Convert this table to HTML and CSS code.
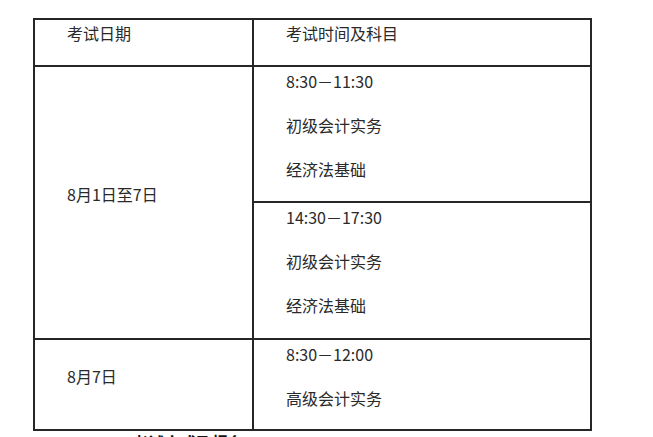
FILE: index.html
```html
<!DOCTYPE html>
<html lang="zh-CN">
<head>
<meta charset="utf-8">
<title>考试时间安排</title>
<link rel="stylesheet" href="styles.css">
</head>
<body>
<table class="exam">
  <tr class="head">
    <td class="c1"><p>考试日期</p></td>
    <td class="c2"><p>考试时间及科目</p></td>
  </tr>
  <tr class="r1">
    <td class="c1 date" rowspan="2"><p>8月1日至7日</p></td>
    <td class="c2 slot"><p>8:30－11:30</p><p>初级会计实务</p><p>经济法基础</p></td>
  </tr>
  <tr class="r2">
    <td class="c2 slot"><p>14:30－17:30</p><p>初级会计实务</p><p>经济法基础</p></td>
  </tr>
  <tr class="r3">
    <td class="c1 date"><p>8月7日</p></td>
    <td class="c2 slot"><p>8:30－12:00</p><p>高级会计实务</p></td>
  </tr>
</table>
<p class="after">二、考试方式及报名</p>
</body>
</html>
```

FILE: styles.css
```css
html, body {
  margin: 0;
  padding: 0;
  background: #fff;
}
body {
  font-family: "Noto Sans CJK SC", "Noto Sans", sans-serif;
  font-size: 16px;
  color: #2a2a2a;
  overflow: hidden;
}
.exam {
  margin: 18px 0 0 33px;
  border-collapse: separate;
  border-spacing: 0;
  border-top: 2px solid #262626;
  border-left: 2px solid #262626;
}
.exam td {
  padding: 0;
  border-right: 2px solid #262626;
  border-bottom: 2px solid #262626;
  vertical-align: top;
}
.exam p {
  margin: 0;
  line-height: 26px;
  text-indent: 2em;
  white-space: nowrap;
}
.c1 { width: 217px; }
.c2 { width: 336px; }
.head td { height: 45px; }
.r1 td.slot { height: 134px; }
.r2 td.slot { height: 135px; }
.r3 td { height: 89px; }
.slot p { margin-bottom: 18px; }
.slot p:first-child { padding-top: 1px; }
.slot p:last-child { margin-bottom: 0; }
.exam td.date { vertical-align: middle; }
.date p { margin-bottom: 18px; }
.after {
  margin: 0;
  padding-left: 100px;
  line-height: 22px;
  font-weight: bold;
  color: #111;
}
```
